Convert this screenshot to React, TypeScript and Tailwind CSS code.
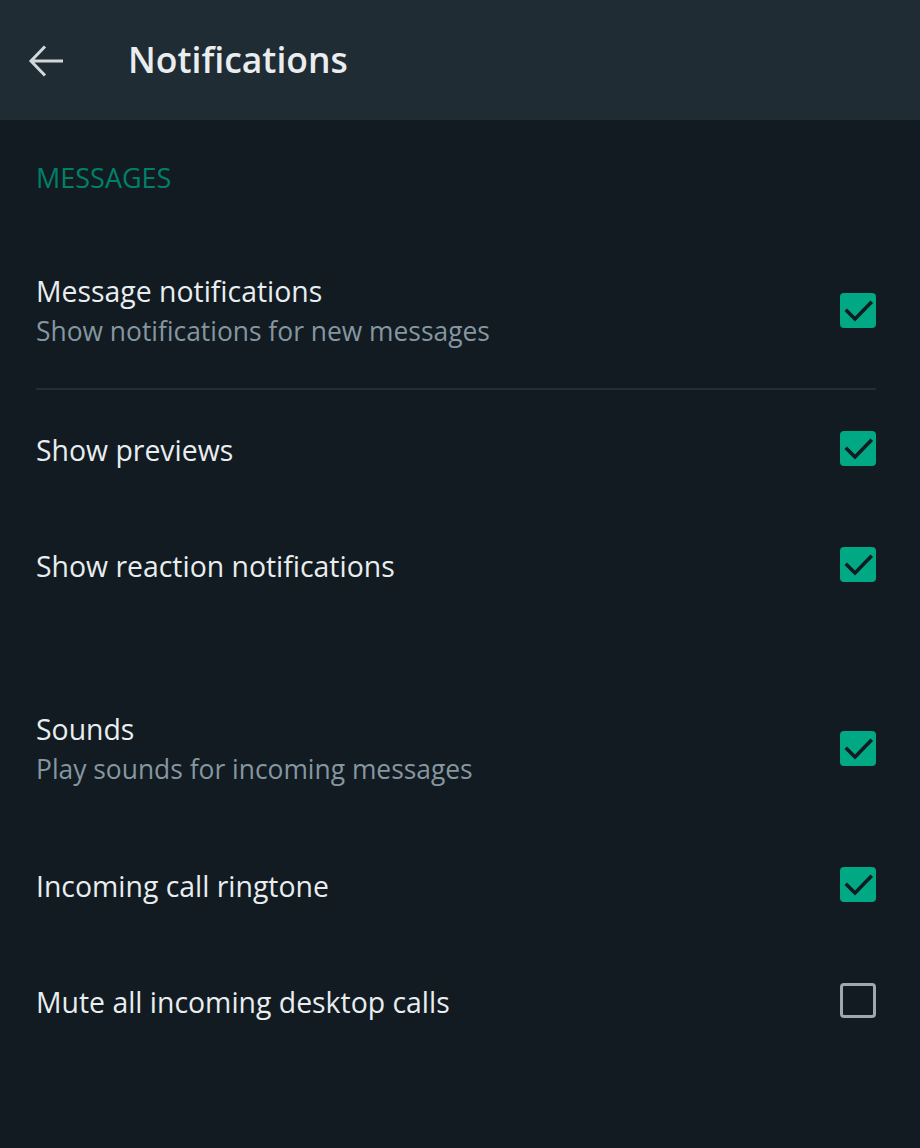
import React, { useState } from "react";

type Item = { id: string; title: string; subtitle?: string; on: boolean };

function Checkbox({ checked, onClick }: { checked: boolean; onClick: () => void }) {
  return (
    <button
      onClick={onClick}
      className={`w-[36px] h-[35px] shrink-0 rounded-[4px] flex items-center justify-center ${
        checked ? "bg-[#00a884]" : "border-[3px] border-[#9ea8ae]"
      }`}
    >
      {checked && (
        <svg width="36" height="35" viewBox="0 0 36 35" fill="none">
          <path d="M7 18l8 8L30.5 10" stroke="#111b21" strokeWidth="3.6" strokeLinecap="square" />
        </svg>
      )}
    </button>
  );
}

function Row({ item, toggle, tall }: { item: Item; toggle: () => void; tall?: boolean }) {
  return (
    <div className={`flex items-center justify-between ${tall ? "h-[156px]" : "h-[116px]"}`}>
      <div className="flex flex-col pt-[4px]">
        <span className="text-[28.4px] leading-[39px] text-[#e9edef]">{item.title}</span>
        {item.subtitle && (
          <span className="text-[26.4px] leading-[41px] text-[#8696a0]">{item.subtitle}</span>
        )}
      </div>
      <Checkbox checked={item.on} onClick={toggle} />
    </div>
  );
}

export default function App() {
  const [items, setItems] = useState<Item[]>([
    { id: "msg", title: "Message notifications", subtitle: "Show notifications for new messages", on: true },
    { id: "prev", title: "Show previews", on: true },
    { id: "react", title: "Show reaction notifications", on: true },
    { id: "sounds", title: "Sounds", subtitle: "Play sounds for incoming messages", on: true },
    { id: "ring", title: "Incoming call ringtone", on: true },
    { id: "mute", title: "Mute all incoming desktop calls", on: false },
  ]);

  const toggle = (id: string) =>
    setItems((prev) => prev.map((it) => (it.id === id ? { ...it, on: !it.on } : it)));

  const get = (id: string) => items.find((it) => it.id === id)!;

  return (
    <div className="w-[920px] h-[1148px] bg-[#111b21]" style={{ fontFamily: '"Open Sans", "Noto Sans", sans-serif' }}>
      {/* header */}
      <div className="h-[120px] bg-[#202c33] flex items-center">
        <button className="ml-[26px] w-[40px] h-[40px] flex items-center justify-center">
          <svg width="40" height="40" viewBox="0 0 40 40" fill="none">
            <path d="M5 21h32M19 6.5L5 21l14 14.5" stroke="#d1d7db" strokeWidth="3" />
          </svg>
        </button>
        <h1 className="ml-[62px] text-[35.5px] font-semibold text-[#e9edef]">Notifications</h1>
      </div>

      <div className="pl-[36px] pr-[44px]">
        <div className="h-[112px] flex items-center pt-[4px]">
          <span className="text-[27px] text-[#008069]">MESSAGES</span>
        </div>

        <Row item={get("msg")} toggle={() => toggle("msg")} tall />
        <div className="h-[2px] bg-[#222d34]" />
        <Row item={get("prev")} toggle={() => toggle("prev")} />
        <Row item={get("react")} toggle={() => toggle("react")} />

        <div className="h-[48px]" />

        <Row item={get("sounds")} toggle={() => toggle("sounds")} tall />
        <Row item={get("ring")} toggle={() => toggle("ring")} />
        <Row item={get("mute")} toggle={() => toggle("mute")} />
      </div>
    </div>
  );
}
